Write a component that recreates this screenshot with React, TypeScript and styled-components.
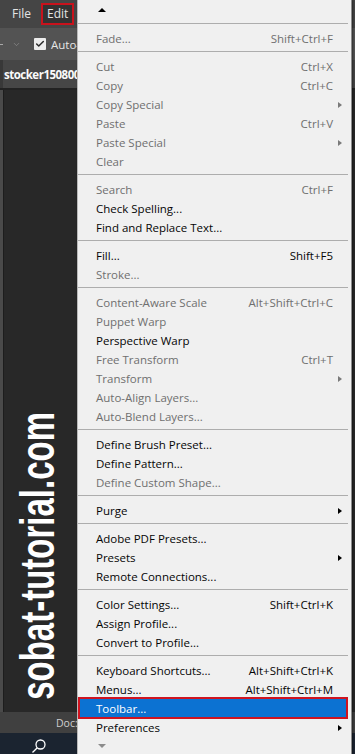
import styled, { createGlobalStyle } from "styled-components";
import { ChevronDown, Check } from "lucide-react";

const GlobalStyle = createGlobalStyle`
  html, body {
    margin: 0;
    padding: 0;
    background: #282828;
  }
  body {
    width: 355px;
    height: 754px;
    overflow: hidden;
  }
`;

type MenuEntry =
  | { sep: true }
  | {
      sep?: false;
      label: string;
      shortcut?: string;
      disabled?: boolean;
      sub?: boolean;
      active?: boolean;
    };

const entries: MenuEntry[] = [
  { sep: true },
  { label: "Fade...", shortcut: "Shift+Ctrl+F", disabled: true },
  { sep: true },
  { label: "Cut", shortcut: "Ctrl+X", disabled: true },
  { label: "Copy", shortcut: "Ctrl+C", disabled: true },
  { label: "Copy Special", sub: true, disabled: true },
  { label: "Paste", shortcut: "Ctrl+V", disabled: true },
  { label: "Paste Special", sub: true, disabled: true },
  { label: "Clear", disabled: true },
  { sep: true },
  { label: "Search", shortcut: "Ctrl+F", disabled: true },
  { label: "Check Spelling..." },
  { label: "Find and Replace Text..." },
  { sep: true },
  { label: "Fill...", shortcut: "Shift+F5" },
  { label: "Stroke...", disabled: true },
  { sep: true },
  { label: "Content-Aware Scale", shortcut: "Alt+Shift+Ctrl+C", disabled: true },
  { label: "Puppet Warp", disabled: true },
  { label: "Perspective Warp" },
  { label: "Free Transform", shortcut: "Ctrl+T", disabled: true },
  { label: "Transform", sub: true, disabled: true },
  { label: "Auto-Align Layers...", disabled: true },
  { label: "Auto-Blend Layers...", disabled: true },
  { sep: true },
  { label: "Define Brush Preset..." },
  { label: "Define Pattern..." },
  { label: "Define Custom Shape...", disabled: true },
  { sep: true },
  { label: "Purge", sub: true },
  { sep: true },
  { label: "Adobe PDF Presets..." },
  { label: "Presets", sub: true },
  { label: "Remote Connections..." },
  { sep: true },
  { label: "Color Settings...", shortcut: "Shift+Ctrl+K" },
  { label: "Assign Profile..." },
  { label: "Convert to Profile..." },
  { sep: true },
  { label: "Keyboard Shortcuts...", shortcut: "Alt+Shift+Ctrl+K" },
  { label: "Menus...", shortcut: "Alt+Shift+Ctrl+M" },
  { label: "Toolbar...", active: true },
  { label: "Preferences", sub: true },
];

const Workspace = styled.div`
  position: relative;
  width: 355px;
  height: 754px;
  display: flex;
  flex-direction: column;
  overflow: hidden;
  background: #282828;
  font-family: "Open Sans", "Noto Sans", sans-serif;
`;

const MenuBar = styled.div`
  height: 28px;
  flex-shrink: 0;
  display: flex;
  align-items: center;
  gap: 3px;
  padding-left: 5px;
  background: #454545;
  color: #e4e4e4;
  font-size: 12px;
`;

const MenuBarItem = styled.span<{ $open?: boolean }>`
  box-sizing: border-box;
  height: 22px;
  line-height: 18px;
  padding: 0 ${(p) => (p.$open ? 4 : 5)}px;
  border: ${(p) => (p.$open ? "2px solid #c8121c" : "2px solid transparent")};
  background: ${(p) => (p.$open ? "#333333" : "transparent")};
`;

const OptionsBar = styled.div`
  height: 32px;
  flex-shrink: 0;
  display: flex;
  align-items: center;
  background: #535353;
  color: #e6e6e6;
  font-size: 11.5px;
`;

const Dash = styled.span`
  width: 3px;
  height: 1px;
  background: #a8a8a8;
  margin-right: 9px;
`;

const Checkbox = styled.span`
  width: 12px;
  height: 12px;
  margin-left: 13px;
  border-radius: 1px;
  background: #ececec;
  display: flex;
  align-items: center;
  justify-content: center;
  color: #2a2a2a;
`;

const OptionLabel = styled.span`
  margin-left: 5px;
  white-space: nowrap;
`;

const TabBar = styled.div`
  height: 28px;
  flex-shrink: 0;
  display: flex;
  background: #383838;
  border-bottom: 2px solid #222;
`;

const DocTab = styled.div`
  margin-left: 3px;
  padding-left: 1px;
  flex: 1;
  display: flex;
  align-items: center;
  background: #464646;
  color: #fafafa;
  font-weight: 700;
  font-size: 11.5px;
  letter-spacing: -0.5px;
  white-space: nowrap;
`;

const Stage = styled.div`
  flex: 1;
  display: flex;
`;

const ToolsEdge = styled.div`
  width: 3px;
  background: #4a4a4a;
  border-right: 1px solid #1d1d1d;
`;

const Canvas = styled.div`
  flex: 1;
  display: flex;
  flex-direction: column;
  justify-content: flex-end;
  padding: 0 0 14px 17px;
  background: #282828;
`;

const WatermarkBox = styled.div`
  width: 32px;
  height: 284px;
  display: flex;
  align-items: center;
  justify-content: center;
`;

const Watermark = styled.span`
  writing-mode: vertical-rl;
  transform: rotate(180deg) scaleX(1.45);
  font-family: "Liberation Sans", Arial, sans-serif;
  font-weight: 700;
  font-size: 33px;
  line-height: 1;
  color: #ffffff;
  white-space: nowrap;
`;

const StatusBar = styled.div`
  height: 21px;
  flex-shrink: 0;
  display: flex;
  align-items: center;
  padding-left: 56px;
  background: #404040;
  color: #cfcfcf;
  font-size: 10.5px;
`;

const Taskbar = styled.div`
  height: 21px;
  flex-shrink: 0;
  display: flex;
  align-items: flex-start;
  padding: 6px 0 0 31px;
  box-sizing: border-box;
  background: #1b2430;
  overflow: hidden;
`;

const DropMenu = styled.div`
  position: absolute;
  top: 0;
  left: 77px;
  width: 275px;
  height: 754px;
  box-sizing: border-box;
  display: flex;
  flex-direction: column;
  background: #f0f0f0;
  border-left: 1px solid #b9b9b9;
  border-right: 1px solid #8c8c8c;
  box-shadow: 1px 0 2px rgba(0, 0, 0, 0.45);
  font-family: "Open Sans", "Noto Sans", sans-serif;
  font-size: 11.5px;
  overflow: hidden;
`;

const ScrollRow = styled.div<{ $h: number }>`
  height: ${(p) => p.$h}px;
  flex-shrink: 0;
  display: flex;
  align-items: center;
  padding-left: 20px;
`;

const UpArrow = styled.span`
  width: 0;
  height: 0;
  border-left: 4px solid transparent;
  border-right: 4px solid transparent;
  border-bottom: 4px solid #000;
`;

const DownArrow = styled.span`
  width: 0;
  height: 0;
  border-left: 4px solid transparent;
  border-right: 4px solid transparent;
  border-top: 4px solid #8c8c8c;
`;

const Separator = styled.div`
  height: 1px;
  flex-shrink: 0;
  margin: 3px 3px 5px 0;
  background: #adadad;
`;

const Row = styled.div<{ $disabled?: boolean; $active?: boolean }>`
  position: relative;
  height: 19px;
  flex-shrink: 0;
  display: grid;
  grid-template-columns: 1fr auto 15px;
  align-items: center;
  margin-right: 3px;
  padding-left: 18px;
  white-space: nowrap;
  color: ${(p) => (p.$active ? "#ffffff" : p.$disabled ? "#6f6f6f" : "#050505")};
  background: ${(p) => (p.$active ? "#0c72d2" : "transparent")};

  ${(p) =>
    p.$active &&
    `
    &::after {
      content: "";
      position: absolute;
      top: -2px;
      bottom: -1px;
      left: 0;
      right: 0;
      border: 2px solid #cf1420;
    }
  `}
`;

const Shortcut = styled.span`
  text-align: right;
  word-spacing: 1px;
`;

const ArrowCell = styled.span`
  display: flex;
  align-items: center;
  height: 100%;
`;

const SubArrow = styled.span<{ $disabled?: boolean }>`
  display: block;
  width: 0;
  height: 0;
  margin-left: 5px;
  border-top: 3.5px solid transparent;
  border-bottom: 3.5px solid transparent;
  border-left: 4px solid ${(p) => (p.$disabled ? "#7a7a7a" : "#000")};
`;

const SearchIcon = () => (
  <svg width="16" height="16" viewBox="0 0 16 16" fill="none" stroke="#ffffff" strokeWidth="1.3">
    <circle cx="9.5" cy="5.5" r="4.5" />
    <line x1="6.3" y1="8.7" x2="1.5" y2="13.5" />
  </svg>
);

const EditMenu = () => (
  <DropMenu>
    <ScrollRow $h={20}>
      <UpArrow />
    </ScrollRow>
    {entries.map((e, i) =>
      e.sep ? (
        <Separator key={i} />
      ) : (
        <Row key={i} $disabled={e.disabled} $active={e.active}>
          <span>{e.label}</span>
          <Shortcut>{e.shortcut ?? ""}</Shortcut>
          <ArrowCell>{e.sub && <SubArrow $disabled={e.disabled} />}</ArrowCell>
        </Row>
      )
    )}
    <ScrollRow $h={17}>
      <DownArrow />
    </ScrollRow>
  </DropMenu>
);

export default function App() {
  return (
    <>
      <GlobalStyle />
      <Workspace>
        <MenuBar>
          <MenuBarItem>File</MenuBarItem>
          <MenuBarItem $open>Edit</MenuBarItem>
        </MenuBar>
        <OptionsBar>
          <Dash />
          <ChevronDown size={9} color="#9c9c9c" strokeWidth={1.5} />
          <Checkbox>
            <Check size={10} strokeWidth={3.5} />
          </Checkbox>
          <OptionLabel>Auto-S</OptionLabel>
        </OptionsBar>
        <TabBar>
          <DocTab>stocker150800</DocTab>
        </TabBar>
        <Stage>
          <ToolsEdge />
          <Canvas>
            <WatermarkBox>
              <Watermark>sobat-tutorial.com</Watermark>
            </WatermarkBox>
          </Canvas>
        </Stage>
        <StatusBar>Doc:</StatusBar>
        <Taskbar>
          <SearchIcon />
        </Taskbar>
        <EditMenu />
      </Workspace>
    </>
  );
}
